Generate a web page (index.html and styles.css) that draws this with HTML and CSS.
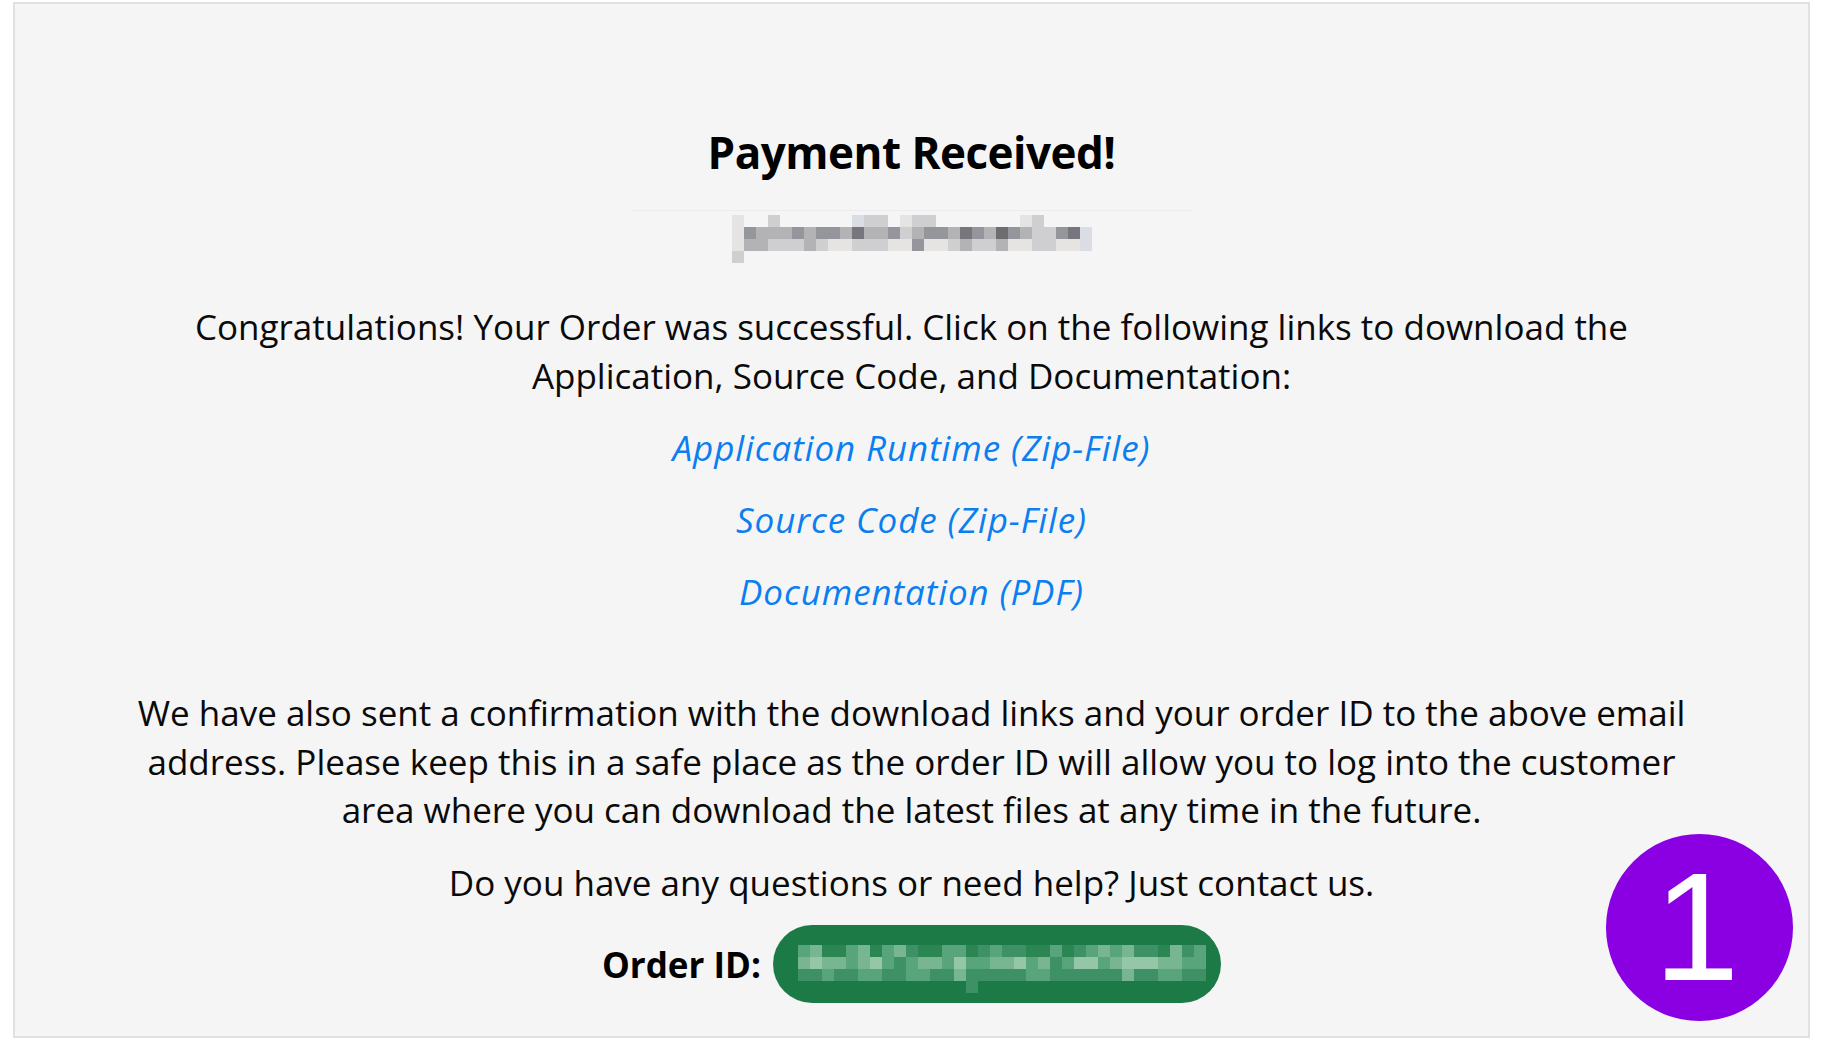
FILE: index.html
```html
<!DOCTYPE html>
<html lang="en">
<head>
<meta charset="utf-8">
<title>Payment Received</title>
<link rel="stylesheet" href="styles.css">
</head>
<body>
<div class="frame">
  <main class="card">
    <header class="head">
      <h1 class="title">Payment Received!</h1>
    </header>
    <div class="email-blur" aria-label="email (hidden)"></div>
    <p class="lead">Congratulations! Your Order was successful. Click on the following links to download the Application, Source Code, and Documentation:</p>
    <p class="dl"><a href="#">Application Runtime (Zip-File)</a></p>
    <p class="dl"><a href="#">Source Code (Zip-File)</a></p>
    <p class="dl"><a href="#">Documentation (PDF)</a></p>
    <p class="lead info">We have also sent a confirmation with the download links and your order ID to the above email address. Please keep this in a safe place as the order ID will allow you to log into the customer area where you can download the latest files at any time in the future.</p>
    <p class="lead">Do you have any questions or need help? Just contact us.</p>
    <div class="order">
      <span class="order-label">Order ID:</span>
      <span class="pill"><span class="id-blur"></span></span>
    </div>
    <div class="badge">1</div>
  </main>
</div>
</body>
</html>
```
FILE: styles.css
```css
* { box-sizing: border-box; }
html, body { margin: 0; padding: 0; background: #ffffff; }
body { font-family: "Open Sans", "Noto Sans", sans-serif; color: #0a0a0a; }

.frame { padding: 2px 13px 4px 13px; }

.card {
  position: relative;
  height: 1036px;
  background: #f5f5f5;
  border: 2px solid #e1e1e1;
  display: flex;
  flex-direction: column;
  align-items: center;
  padding-top: 121px;
  text-align: center;
}

.head {
  width: 562px;
  border-bottom: 1px solid #ececec;
  padding-bottom: 31px;
}

.title {
  margin: 0;
  font-size: 44px;
  line-height: 54px;
  font-weight: 700;
  color: #000;
  letter-spacing: -0.5px;
}

.email-blur {
  --a: #e6e4e2; --b: #cfcfd1; --c: #b3b3b6; --d: #95959c; --e: #76767c; --f: #dadde4;
  width: 360px;
  height: 48px;
  margin-top: 4px;
  background:
    linear-gradient(90deg, var(--a) 0 12px, transparent 12px 36px, var(--b) 36px 48px, transparent 48px 120px, var(--f) 120px 132px, var(--b) 132px 156px, transparent 156px 168px, var(--a) 168px 180px, var(--b) 180px 204px, transparent 204px 288px, var(--a) 288px 300px, var(--b) 300px 312px, transparent 312px 360px) 0 0 / 360px 12px no-repeat,
    linear-gradient(90deg, var(--a) 0 12px, var(--d) 12px 24px, var(--c) 24px 48px, var(--c) 48px 60px, var(--d) 60px 72px, var(--c) 72px 84px, var(--d) 84px 96px, var(--d) 96px 108px, var(--c) 108px 120px, var(--e) 120px 132px, var(--c) 132px 156px, var(--d) 156px 168px, var(--b) 168px 180px, var(--c) 180px 192px, var(--d) 192px 204px, var(--d) 204px 216px, var(--c) 216px 228px, var(--e) 228px 240px, var(--d) 240px 252px, var(--c) 252px 264px, #6d6d6f 264px 276px, var(--d) 276px 288px, var(--c) 288px 300px, var(--b) 300px 324px, var(--d) 324px 336px, var(--e) 336px 348px, var(--f) 348px 360px) 0 12px / 360px 12px no-repeat,
    linear-gradient(90deg, var(--a) 0 12px, var(--c) 12px 36px, var(--b) 36px 72px, var(--c) 72px 84px, var(--b) 84px 96px, var(--a) 96px 120px, var(--b) 120px 156px, var(--a) 156px 180px, var(--d) 180px 192px, var(--a) 192px 216px, var(--b) 216px 228px, var(--c) 228px 240px, var(--b) 240px 264px, var(--c) 264px 276px, var(--a) 276px 300px, var(--b) 300px 324px, var(--a) 324px 348px, var(--f) 348px 360px) 0 24px / 360px 12px no-repeat,
    linear-gradient(90deg, var(--b) 0 12px, transparent 12px) 0 36px / 360px 12px no-repeat;
}

.lead {
  font-size: 35px;
  line-height: 48.5px;
  margin: 40px 0 0;
  max-width: 1590px;
}

.dl {
  font-size: 35px;
  line-height: 48px;
  margin: 24px 0 0;
}

.dl a {
  color: #0b7ef0;
  font-style: italic;
  text-decoration: none;
  letter-spacing: 0.9px;
}

.info { margin-top: 73px; }
.info + .lead { margin-top: 24px; }

.order {
  margin-top: 18px;
  display: flex;
  align-items: center;
  gap: 12px;
}

.order-label {
  font-size: 35px;
  font-weight: 700;
  color: #000;
}

.pill {
  display: flex;
  align-items: flex-start;
  width: 448px;
  height: 78px;
  border-radius: 39px;
  background: #1c7a46;
  padding: 20px 0 0 25px;
}

.id-blur {
  --g1: #3d9164; --g2: #58a47b; --g3: #78b692; --g4: #96c6a8; --g5: #2c8654;
  width: 408px;
  height: 48px;
  background:
    linear-gradient(90deg, var(--g2) 0 12px, var(--g3) 12px 24px, var(--g5) 24px 48px, var(--g2) 48px 60px, var(--g3) 60px 72px, var(--g5) 72px 84px, var(--g2) 84px 96px, var(--g3) 96px 108px, var(--g1) 108px 120px, var(--g5) 120px 144px, var(--g2) 144px 168px, var(--g5) 168px 180px, var(--g1) 180px 192px, var(--g2) 192px 204px, var(--g1) 204px 228px, var(--g5) 228px 252px, var(--g2) 252px 264px, var(--g5) 264px 276px, var(--g1) 276px 288px, var(--g2) 288px 300px, var(--g3) 300px 312px, var(--g2) 312px 324px, var(--g3) 324px 336px, var(--g1) 336px 360px, var(--g5) 360px 372px, var(--g3) 372px 384px, var(--g1) 384px 396px, var(--g2) 396px 408px) 0 0 / 408px 12px no-repeat,
    linear-gradient(90deg, var(--g3) 0 12px, var(--g4) 12px 24px, var(--g3) 24px 48px, var(--g2) 48px 60px, var(--g3) 60px 72px, var(--g4) 72px 84px, var(--g2) 84px 96px, var(--g1) 96px 108px, var(--g2) 108px 120px, var(--g3) 120px 144px, var(--g2) 144px 156px, var(--g4) 156px 168px, var(--g2) 168px 192px, var(--g3) 192px 216px, var(--g4) 216px 228px, var(--g2) 228px 240px, var(--g3) 240px 252px, var(--g1) 252px 264px, var(--g2) 264px 276px, var(--g4) 276px 300px, var(--g2) 300px 312px, var(--g3) 312px 324px, var(--g4) 324px 360px, var(--g3) 360px 384px, var(--g2) 384px 408px) 0 12px / 408px 12px no-repeat,
    linear-gradient(90deg, var(--g1) 0 24px, var(--g2) 24px 36px, var(--g1) 36px 60px, var(--g2) 60px 84px, var(--g1) 84px 108px, var(--g2) 108px 132px, var(--g1) 132px 156px, var(--g3) 156px 168px, var(--g1) 168px 228px, var(--g2) 228px 252px, var(--g1) 252px 324px, var(--g3) 324px 336px, var(--g1) 336px 360px, var(--g2) 360px 384px, var(--g1) 384px 408px) 0 24px / 408px 12px no-repeat,
    linear-gradient(90deg, transparent 0 168px, var(--g1) 168px 180px, transparent 180px) 0 36px / 408px 12px no-repeat;
}

.badge {
  position: absolute;
  right: 15px;
  bottom: 15px;
  width: 187px;
  height: 187px;
  border-radius: 50%;
  background: #8b00e2;
  color: #fff;
  font-family: "Liberation Sans", Arial, sans-serif;
  font-size: 154px;
  line-height: 187px;
  text-align: center;
  text-indent: -6px;
}
```
